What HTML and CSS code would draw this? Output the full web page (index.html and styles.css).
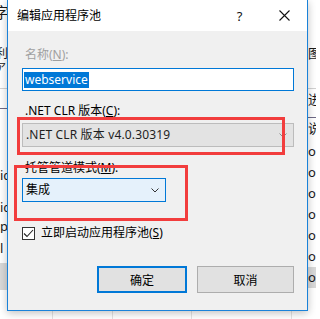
FILE: index.html
```html
<!DOCTYPE html>
<html lang="zh-CN">
<head>
<meta charset="utf-8">
<title>编辑应用程序池</title>
<link rel="stylesheet" href="styles.css">
</head>
<body>
<div class="backdrop">
  <div class="strip strip-left">
    <div class="frag f-zi">字</div>
    <div class="frag f-li">利</div>
    <div class="frag f-a">ア</div>
    <div class="hline l-grey1"></div>
    <div class="hline dark l-dark1"></div>
    <div class="frag f-ic1">ic</div>
    <div class="frag f-ic2">ic</div>
    <div class="frag f-pp">pp</div>
    <div class="frag f-l">l</div>
    <div class="band band-left"></div>
  </div>
  <div class="middle">
    <div class="grid-row">
      <div class="cell c1"></div>
      <div class="cell c2"></div>
      <div class="cell c3"></div>
      <div class="cell c4"></div>
      <div class="cell c5"></div>
    </div>
  </div>
  <div class="strip strip-right">
    <div class="frag r-tu">图</div>
    <div class="hline r-grey1"></div>
    <div class="frag r-jin">进</div>
    <div class="hline dark r-dark1"></div>
    <div class="frag r-shuo">说</div>
    <div class="orow">o</div>
    <div class="orow">o</div>
    <div class="orow">o</div>
    <div class="orow">o</div>
    <div class="orow">o</div>
    <div class="orow">o</div>
    <div class="orow band-row">o</div>
  </div>
</div>

<div class="dialog">
  <div class="titlebar">
    <div class="title">编辑应用程序池</div>
    <div class="tb-btn help">?</div>
    <div class="tb-btn close">
      <svg width="11" height="11" viewBox="0 0 11 11"><path d="M0.5 0.5 L10.5 10.5 M10.5 0.5 L0.5 10.5" stroke="#111" stroke-width="1.1" fill="none"/></svg>
    </div>
  </div>
  <div class="content">
    <div class="label disabled label-name">名称(<u>N</u>):</div>
    <div class="textbox"><span class="sel">webservice</span></div>
    <div class="label label-clr">.NET CLR 版本(<u>C</u>):</div>
    <div class="combo combo-disabled">
      <span class="combo-text">.NET CLR 版本 v4.0.30319</span>
      <svg class="chev" width="8" height="5" viewBox="0 0 8 5"><path d="M0.5 0.5 L4 4 L7.5 0.5" stroke="#8c8c8c" stroke-width="1" fill="none"/></svg>
    </div>
    <div class="label label-mode">托管管道模式(<u>M</u>):</div>
    <div class="combo combo-active">
      <span class="combo-text">集成</span>
      <svg class="chev" width="8" height="5" viewBox="0 0 8 5"><path d="M0.5 0.5 L4 4 L7.5 0.5" stroke="#333" stroke-width="1" fill="none"/></svg>
    </div>
    <div class="check-row">
      <span class="checkbox">
        <svg width="11" height="11" viewBox="0 0 11 11"><path d="M1 5.5 L4 8.5 L10 2" stroke="#222" stroke-width="1.1" fill="none"/></svg>
      </span>
      <span class="check-label">立即启动应用程序池(<u>S</u>)</span>
    </div>
    <div class="buttons">
      <div class="btn btn-ok">确定</div>
      <div class="btn btn-cancel">取消</div>
    </div>
  </div>
  <div class="mark mark-clr"></div>
  <div class="mark mark-mode"></div>
</div>
</body>
</html>
```
FILE: styles.css
```css
html, body {
  margin: 0;
  padding: 0;
}
body {
  width: 316px;
  height: 319px;
  overflow: hidden;
  position: relative;
  background: #ffffff;
  font-family: "Noto Sans", "Noto Sans CJK SC", sans-serif;
  font-size: 12px;
  color: #000;
}

/* ---------- background application ---------- */
.backdrop {
  display: flex;
  height: 319px;
}
.strip {
  display: flex;
  flex-direction: column;
  overflow: hidden;
  white-space: nowrap;
  font-size: 13px;
  color: #1a1a1a;
}
.strip-left { width: 7px; }
.strip-right { width: 8px; }
.middle {
  flex: 1;
  display: flex;
  flex-direction: column;
  justify-content: flex-end;
}
.grid-row {
  display: flex;
  height: 9px;
}
.cell { border-right: 1px solid #e3e3e3; }
.c1 { width: 45px; }
.c2 { width: 59px; }
.c3 { width: 78px; }
.c4 { width: 99px; }
.c5 { flex: 1; border-right: none; }

.frag { line-height: 14px; height: 14px; overflow: hidden; }
.hline { height: 1px; background: #d2d2d2; }
.hline.dark { background: #6e6a86; }
.band { background: #d9d9d9; }

.f-zi { margin-top: 4px; margin-left: -6px; font-size: 15px; line-height: 16px; height: 16px; }
.f-li { margin-top: 27px; margin-left: -4px; font-size: 12px; line-height: 13px; height: 13px; }
.f-a { margin-top: 1px; margin-left: -5px; font-size: 11px; line-height: 13px; height: 13px; }
.l-grey1 { margin-top: 14px; }
.l-dark1 { margin-top: 19px; }
.f-ic1 { margin-top: 59px; }
.f-ic2 { margin-top: 18px; }
.f-pp { margin-top: 5px; }
.f-l { margin-top: 8px; }
.band-left { margin-top: 8px; height: 27px; }

.r-tu { margin-top: 46px; }
.r-grey1 { margin-top: 28px; }
.r-jin { margin-top: 3px; }
.r-dark1 { margin-top: 11px; }
.r-shuo { margin-top: 3px; }
.orow { height: 21px; line-height: 21px; }
.r-shuo + .orow { margin-top: 6px; }
.band-row { background: #d9d9d9; }

/* ---------- dialog ---------- */
.dialog {
  position: absolute;
  left: 7px;
  top: 0;
  width: 301px;
  height: 311px;
  box-sizing: border-box;
  border: 1px solid #1a82d9;
  border-top: none;
  background: #f0f0f0;
  box-shadow: 0 2px 8px rgba(0, 0, 0, 0.25);
}
.titlebar {
  height: 31px;
  background: #ffffff;
  display: flex;
  align-items: center;
}
.title {
  flex: 1;
  padding-left: 9px;
  font-size: 12px;
  line-height: 16px;
}
.tb-btn {
  width: 45px;
  height: 31px;
  display: flex;
  align-items: center;
  justify-content: center;
}
.help {
  font-size: 13px;
  color: #111;
  padding-top: 1px;
  box-sizing: border-box;
}

.content {
  padding: 0 13px 0 14px;
  display: flex;
  flex-direction: column;
}
.label {
  line-height: 16px;
  height: 16px;
  padding-left: 3px;
}
.label.disabled { color: #a0a0a0; }
.label-name { margin-top: 16px; }
.label-clr { margin-top: 12px; }
.label-mode { margin-top: 13px; }

.textbox {
  margin-top: 5px;
  height: 23px;
  box-sizing: border-box;
  border: 1px solid #0078d7;
  background: #fff;
  padding: 2px 0 0 1px;
}
.sel {
  display: inline-block;
  background: #0078d7;
  color: #fff;
  line-height: 16px;
  height: 16px;
  padding: 0 1px;
}

.combo {
  height: 24px;
  box-sizing: border-box;
  display: flex;
  align-items: center;
  justify-content: space-between;
  padding: 0 6px 0 3px;
}
.combo-disabled {
  margin-top: 4px;
  background: #e3e3e3;
  border: 1px solid #bcbcbc;
  color: #1e1e1e;
}
.combo-disabled .combo-text { letter-spacing: 0.15px; }
.combo-active {
  margin-top: 2px;
  width: 144px;
  background: #e5f1fb;
  border: 1px solid #0078d7;
}
.combo-text { line-height: 16px; }

.check-row {
  margin-top: 23px;
  height: 16px;
  display: flex;
  align-items: center;
  gap: 6px;
}
.checkbox {
  width: 13px;
  height: 13px;
  box-sizing: border-box;
  border: 1px solid #333;
  background: #fff;
  display: flex;
  align-items: center;
  justify-content: center;
}
.check-label { line-height: 16px; }

.buttons {
  margin-top: 25px;
  display: flex;
  justify-content: flex-end;
  gap: 10px;
}
.btn {
  height: 27px;
  box-sizing: border-box;
  background: #e1e1e1;
  display: flex;
  align-items: center;
  justify-content: center;
}
.btn-ok {
  width: 90px;
  border: 2px solid #0078d7;
}
.btn-cancel {
  width: 97px;
  border: 1px solid #adadad;
}

/* annotation boxes */
.mark {
  position: absolute;
  border: 3px solid #f23d3d;
  box-sizing: border-box;
}
.mark-clr {
  left: 9px;
  top: 117px;
  width: 268px;
  height: 38px;
}
.mark-mode {
  left: 6px;
  top: 165px;
  width: 174px;
  height: 56px;
}
```
